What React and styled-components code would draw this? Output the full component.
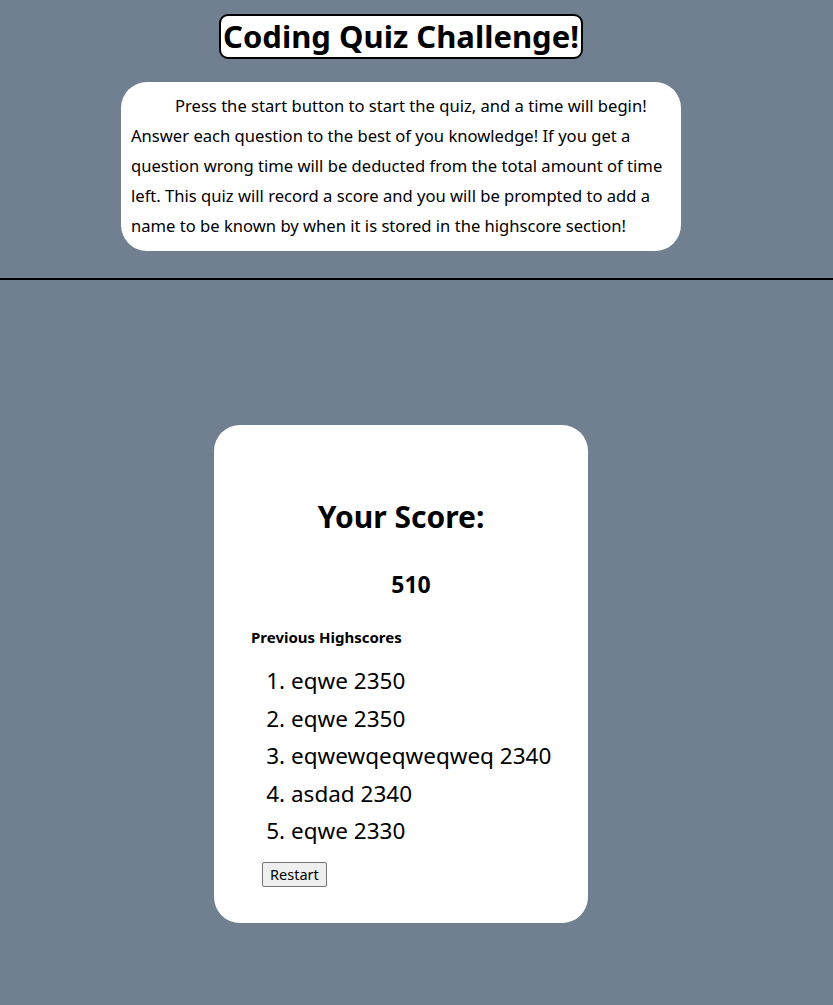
import React from "react";
import styled, { createGlobalStyle } from "styled-components";

const GlobalStyle = createGlobalStyle`
  html, body {
    margin: 0;
    padding: 0;
    background-color: #708090;
    font-family: "Noto Sans", "Open Sans", sans-serif;
    color: #000;
  }
`;

const Page = styled.div`
  min-height: 1005px;
`;

const Header = styled.header`
  border-bottom: 2px solid #000;
  padding: 14px 0 27px;
`;

const Column = styled.div`
  width: 802px;
  display: flex;
  flex-direction: column;
  align-items: center;
`;

const Title = styled.h1`
  margin: 0;
  padding: 0 2px;
  font-size: 31px;
  line-height: 41px;
  font-weight: 700;
  background: #fff;
  border: 2px solid #000;
  border-radius: 9px;
`;

const Intro = styled.p`
  margin: 23px 0 0;
  width: 560px;
  box-sizing: border-box;
  padding: 9px 10px 10px;
  background: #fff;
  border-radius: 26px;
  font-size: 16.6px;
  line-height: 30px;
  text-indent: 44px;
`;

const Main = styled.main`
  padding-top: 145px;
`;

const Card = styled.section`
  width: 374px;
  height: 498px;
  box-sizing: border-box;
  background: #fff;
  border-radius: 26px;
  padding: 70px 37px 0;
  display: flex;
  flex-direction: column;
`;

const ScoreHeading = styled.h2`
  margin: 0;
  text-align: center;
  font-size: 30px;
  line-height: 44px;
  font-weight: 700;
`;

const ScoreValue = styled.div`
  margin-top: 30px;
  padding-left: 20px;
  text-align: center;
  font-size: 23px;
  font-weight: 700;
  line-height: 30px;
`;

const ListLabel = styled.h4`
  margin: 28px 0 0;
  font-size: 15px;
  line-height: 20px;
  font-weight: 700;
`;

const ScoreList = styled.ol`
  margin: 15px 0 0;
  padding-left: 40px;
  font-size: 22.5px;
  line-height: 37.5px;
  white-space: nowrap;
`;

const Restart = styled.button`
  align-self: flex-start;
  margin: 12px 0 0 11px;
  font-family: inherit;
  font-size: 14.5px;
  line-height: 21px;
  padding: 1px 7px;
  background: #efefef;
  border: 1px solid #767676;
  border-radius: 2px;
  color: #000;
`;

const scores = [
  { name: "eqwe", score: 2350 },
  { name: "eqwe", score: 2350 },
  { name: "eqwewqeqweqweq", score: 2340 },
  { name: "asdad", score: 2340 },
  { name: "eqwe", score: 2330 },
];

const App = () => {
  return (
    <Page>
      <GlobalStyle />
      <Header>
        <Column>
          <Title>Coding Quiz Challenge!</Title>
          <Intro>
            Press the start button to start the quiz, and a time will begin!
            Answer each question to the best of you knowledge! If you get a
            question wrong time will be deducted from the total amount of time
            left. This quiz will record a score and you will be prompted to add
            a name to be known by when it is stored in the highscore section!
          </Intro>
        </Column>
      </Header>
      <Main>
        <Column>
          <Card>
            <ScoreHeading>Your Score:</ScoreHeading>
            <ScoreValue>510</ScoreValue>
            <ListLabel>Previous Highscores</ListLabel>
            <ScoreList>
              {scores.map((s, i) => (
                <li key={i}>
                  {s.name} {s.score}
                </li>
              ))}
            </ScoreList>
            <Restart>Restart</Restart>
          </Card>
        </Column>
      </Main>
    </Page>
  );
};

export default App;
